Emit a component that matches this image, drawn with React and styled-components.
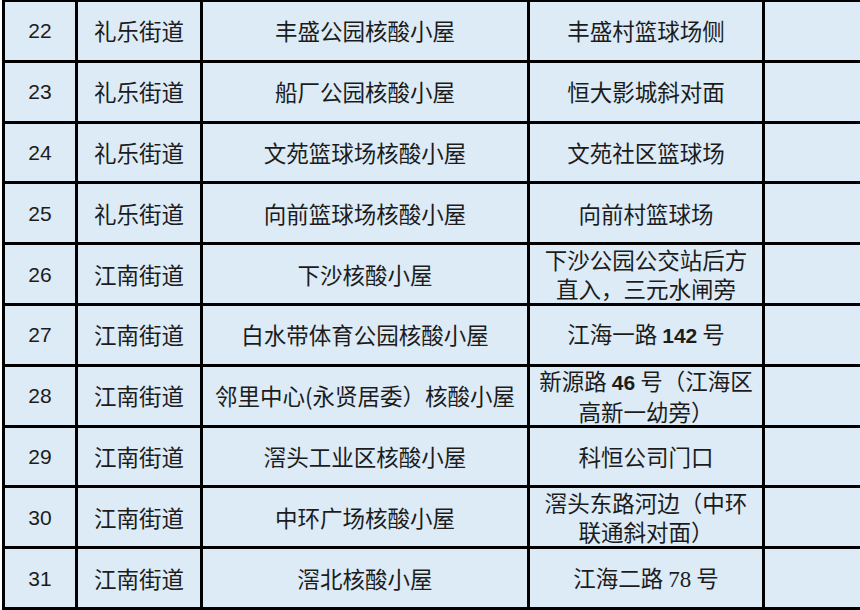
import React from 'react';
import styled, { createGlobalStyle } from 'styled-components';

const Global = createGlobalStyle`
  html, body {
    margin: 0;
    padding: 0;
    background: #ffffff;
    overflow: hidden;
  }
`;

const Table = styled.div`
  display: grid;
  grid-template-columns: 70px 122px 324px 232px 120px;
  grid-auto-rows: 57.8px;
  gap: 3px;
  padding: 3px;
  background: #000000;
  margin: -1px 0 0 2px;
  width: max-content;
`;

const Cell = styled.div`
  background: #ddebf7;
  display: flex;
  flex-direction: column;
  align-items: center;
  justify-content: center;
  text-align: center;
  white-space: nowrap;
  color: #1c1c1c;
  font-family: ${(p) =>
    p.$num
      ? '"Liberation Sans", Arial, sans-serif'
      : '"Noto Sans CJK SC", "Noto Sans", sans-serif'};
  font-size: ${(p) => (p.$num ? '21px' : '22.5px')};
  line-height: 29px;
`;

const Line = styled.div`
  display: block;
`;

const Digits = styled.span`
  font-family: ${(p) =>
    p.$serif
      ? '"Liberation Serif", "Times New Roman", serif'
      : '"Liberation Sans", Arial, sans-serif'};
  font-weight: ${(p) => (p.$bold ? 700 : 400)};
  font-size: ${(p) => (p.$serif ? '23px' : '21px')};
`;

const rows = [
  { n: 22, s: '礼乐街道', name: '丰盛公园核酸小屋', addr: [['丰盛村篮球场侧']] },
  { n: 23, s: '礼乐街道', name: '船厂公园核酸小屋', addr: [['恒大影城斜对面']] },
  { n: 24, s: '礼乐街道', name: '文苑篮球场核酸小屋', addr: [['文苑社区篮球场']] },
  { n: 25, s: '礼乐街道', name: '向前篮球场核酸小屋', addr: [['向前村篮球场']] },
  { n: 26, s: '江南街道', name: '下沙核酸小屋', addr: [['下沙公园公交站后方'], ['直入，三元水闸旁']] },
  { n: 27, s: '江南街道', name: '白水带体育公园核酸小屋', addr: [['江海一路 ', { d: '142', bold: true }, ' 号']] },
  { n: 28, s: '江南街道', name: '邻里中心(永贤居委）核酸小屋', addr: [['新源路 ', { d: '46', bold: true }, ' 号（江海区'], ['高新一幼旁）']] },
  { n: 29, s: '江南街道', name: '滘头工业区核酸小屋', addr: [['科恒公司门口']] },
  { n: 30, s: '江南街道', name: '中环广场核酸小屋', addr: [['滘头东路河边（中环'], ['联通斜对面）']] },
  { n: 31, s: '江南街道', name: '滘北核酸小屋', addr: [['江海二路 ', { d: '78', serif: true }, ' 号']] },
];

function renderPart(part, i) {
  if (typeof part === 'string') return <React.Fragment key={i}>{part}</React.Fragment>;
  return (
    <Digits key={i} $bold={part.bold} $serif={part.serif}>
      {part.d}
    </Digits>
  );
}

export default function App() {
  return (
    <>
      <Global />
      <Table>
        {rows.map((r) => (
          <React.Fragment key={r.n}>
            <Cell $num>{r.n}</Cell>
            <Cell>{r.s}</Cell>
            <Cell>{r.name}</Cell>
            <Cell>
              {r.addr.map((line, li) => (
                <Line key={li}>{line.map(renderPart)}</Line>
              ))}
            </Cell>
            <Cell />
          </React.Fragment>
        ))}
      </Table>
    </>
  );
}
